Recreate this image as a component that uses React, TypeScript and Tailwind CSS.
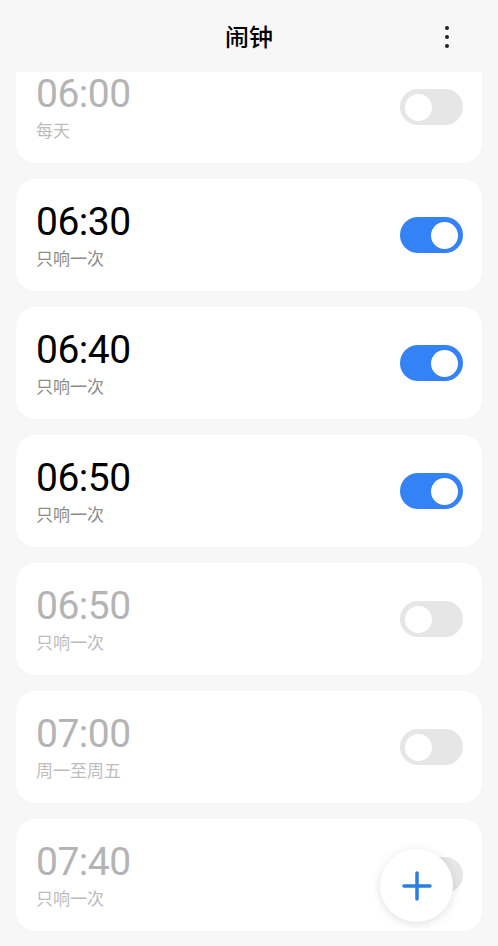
import { useState } from 'react'

interface Alarm {
  time: string
  label: string
  on: boolean
}

const initialAlarms: Alarm[] = [
  { time: '06:00', label: '每天', on: false },
  { time: '06:30', label: '只响一次', on: true },
  { time: '06:40', label: '只响一次', on: true },
  { time: '06:50', label: '只响一次', on: true },
  { time: '06:50', label: '只响一次', on: false },
  { time: '07:00', label: '周一至周五', on: false },
  { time: '07:40', label: '只响一次', on: false }
]

const font = { fontFamily: 'Roboto, "Noto Sans CJK SC", sans-serif' }
const cjk = { fontFamily: '"Noto Sans CJK SC", sans-serif' }

function Toggle({ on, onClick }: { on: boolean; onClick: () => void }) {
  return (
    <button
      onClick={onClick}
      className={`flex h-[36px] w-[63px] items-center rounded-full px-[5px] ${
        on ? 'justify-end bg-[#3482f5]' : 'justify-start bg-[#e6e6e6]'
      }`}
    >
      <span className="block h-[27px] w-[27px] rounded-full bg-white" />
    </button>
  )
}

export default function App() {
  const [alarms, setAlarms] = useState(initialAlarms)

  const toggle = (i: number) => {
    setAlarms(prev => prev.map((a, idx) => (idx === i ? { ...a, on: !a.on } : a)))
  }

  return (
    <div className="relative flex h-[946px] w-full flex-col overflow-hidden bg-[#f7f7f7]" style={font}>
      {/* Cabecera */}
      <header className="relative z-10 flex h-[72px] shrink-0 items-center justify-center bg-[#f7f7f7]">
        <h1 className="text-[24px] font-medium text-black" style={cjk}>
          闹钟
        </h1>
        <button className="absolute right-[49px] top-[26px] flex flex-col items-center gap-[5px]">
          <span className="block h-[4px] w-[4px] rounded-full bg-[#222]" />
          <span className="block h-[4px] w-[4px] rounded-full bg-[#222]" />
          <span className="block h-[4px] w-[4px] rounded-full bg-[#222]" />
        </button>
      </header>

      {/* Lista de alarmas */}
      <div className="flex-1 overflow-hidden">
        <div className="mt-[-21px] flex flex-col gap-[16px] px-[16px]">
          {alarms.map((a, i) => (
            <div key={i} className="flex h-[112px] items-center justify-between rounded-[20px] bg-white pl-[20px] pr-[19px]">
              <div className="flex flex-col">
                <span
                  className={`text-[39px] leading-[41px] tracking-[-0.5px] ${a.on ? 'text-black' : 'text-[#b4b4b4]'}`}
                  style={font}
                >
                  {a.time}
                </span>
                <span
                  className={`mt-[5px] text-[17px] leading-[20px] ${a.on ? 'text-[#8c8c8c]' : 'text-[#bdbdbd]'}`}
                  style={cjk}
                >
                  {a.label}
                </span>
              </div>
              <Toggle on={a.on} onClick={() => toggle(i)} />
            </div>
          ))}
        </div>
      </div>

      {/* Botón flotante */}
      <button className="absolute left-[380px] top-[849px] flex h-[73px] w-[73px] items-center justify-center rounded-full bg-white shadow-[0_2px_10px_rgba(0,0,0,0.12)]">
        <svg width="32" height="32" viewBox="0 0 32 32" fill="none" stroke="#2b7de2" strokeWidth="3.5" strokeLinecap="round">
          <path d="M16 3v26M3 16h26" />
        </svg>
      </button>
    </div>
  )
}
